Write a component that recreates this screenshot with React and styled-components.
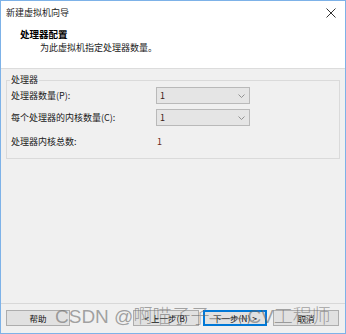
import React from "react"
import styled, { createGlobalStyle } from "styled-components"

const GlobalStyle = createGlobalStyle`
  html, body {
    margin: 0;
    padding: 0;
    background: #ffffff;
  }
  * {
    box-sizing: border-box;
  }
`

const rows = [
  { label: "处理器数量(P):", value: "1", select: true },
  { label: "每个处理器的内核数量(C):", value: "1", select: true },
  { label: "处理器内核总数:", value: "1", select: false },
]

const buttons = [
  { text: "帮助", primary: false, gapLeft: 0 },
  { text: "< 上一步(B)", primary: false, gapLeft: 63 },
  { text: "下一步(N) >", primary: true, gapLeft: 4 },
  { text: "取消", primary: false, gapLeft: 6 },
]

const App = () => {
  return (
    <>
      <GlobalStyle />
      <Window>
        <TitleBar>
          <TitleText>新建虚拟机向导</TitleText>
          <CloseButton>
            <svg width="10" height="10" viewBox="0 0 10 10">
              <path d="M0.5 0.5 L9.5 9.5 M9.5 0.5 L0.5 9.5" stroke="#333" strokeWidth="1" />
            </svg>
          </CloseButton>
        </TitleBar>
        <Header>
          <HeaderTitle>处理器配置</HeaderTitle>
          <HeaderSub>为此虚拟机指定处理器数量。</HeaderSub>
        </Header>
        <Body>
          <GroupBox>
            <Legend>处理器</Legend>
            <Rows>
              {rows.map((r) => (
                <Row key={r.label}>
                  <Label>{r.label}</Label>
                  {r.select ? (
                    <Select>
                      <span>{r.value}</span>
                      <svg width="7" height="4" viewBox="0 0 7 4">
                        <path d="M0.5 0.5 L3.5 3.5 L6.5 0.5" fill="none" stroke="#888" strokeWidth="0.9" />
                      </svg>
                    </Select>
                  ) : (
                    <Value>{r.value}</Value>
                  )}
                </Row>
              ))}
            </Rows>
          </GroupBox>
        </Body>
        <Footer>
          {buttons.map((b) => (
            <Button key={b.text} $primary={b.primary} $gap={b.gapLeft}>
              {b.text}
            </Button>
          ))}
          <Watermark>CSDN @啊喵子子——CV工程师</Watermark>
        </Footer>
      </Window>
    </>
  )
}

const Window = styled.div`
  position: relative;
  width: 346px;
  height: 334px;
  display: flex;
  flex-direction: column;
  border: 1px solid #7db2e8;
  background: #f0f0f0;
  font-family: "Noto Sans CJK SC", "Microsoft YaHei", sans-serif;
  font-size: 9px;
  color: #1a1a1a;
  overflow: hidden;
`

const TitleBar = styled.div`
  height: 22px;
  display: flex;
  align-items: center;
  justify-content: space-between;
  padding: 1px 8px 0 5px;
  background: #ffffff;
`

const TitleText = styled.span`
  font-size: 9px;
  line-height: 12px;
  color: #222;
`

const CloseButton = styled.span`
  display: flex;
  align-items: center;
  margin-right: 1px;
`

const Header = styled.div`
  height: 46px;
  background: #ffffff;
  border-bottom: 1px solid #dcdcdc;
  padding: 5px 0 0 19px;
  display: flex;
  flex-direction: column;
`

const HeaderTitle = styled.div`
  font-weight: 700;
  font-size: 9.5px;
  line-height: 12px;
  color: #000;
`

const HeaderSub = styled.div`
  font-size: 9px;
  line-height: 12px;
  margin-top: 2px;
  padding-left: 20px;
  color: #222;
`

const Body = styled.div`
  flex: 1;
  padding: 5px 5px 0 5px;
`

const GroupBox = styled.fieldset`
  margin: 0;
  padding: 1px 4px 8px 4px;
  border: 1px solid #dadada;
  border-radius: 0;
  min-width: 0;
`

const Legend = styled.legend`
  padding: 0 1px;
  margin-left: -1px;
  font-size: 9px;
  line-height: 12px;
  color: #222;
`

const Rows = styled.div`
  display: flex;
  flex-direction: column;
  gap: 5px;
`

const Row = styled.div`
  display: grid;
  grid-template-columns: 145px 94px;
  align-items: center;
  height: 17px;
  &:last-child {
    margin-top: 2px;
  }
`

const Label = styled.span`
  font-size: 9px;
  line-height: 12px;
  color: #1a1a1a;
`

const Select = styled.div`
  height: 17px;
  display: flex;
  align-items: center;
  justify-content: space-between;
  padding: 0 4px 0 3px;
  background: #e5e5e5;
  border: 1px solid #b9b9b9;
  font-size: 9px;
  line-height: 12px;
  color: #3a2015;
`

const Value = styled.span`
  font-size: 9px;
  line-height: 12px;
  color: #6a2a20;
  padding-left: 1px;
`

const Footer = styled.div`
  position: relative;
  height: 29px;
  border-top: 1px solid #d8d8d8;
  display: flex;
  align-items: flex-start;
  padding: 6px 0 0 5px;
  margin-bottom: 1px;
`

const Button = styled.div`
  width: ${(p) => (p.$primary ? 64 : p.$gap === 0 ? 64 : 66)}px;
  height: 16px;
  margin-left: ${(p) => p.$gap}px;
  display: flex;
  align-items: center;
  justify-content: center;
  background: #e1e1e1;
  border: 1px solid ${(p) => (p.$primary ? "#0078d7" : "#adadad")};
  box-shadow: ${(p) => (p.$primary ? "inset 0 0 0 1px #0078d7" : "none")};
  font-size: 8.5px;
  line-height: 11px;
  color: #111;
`

const Watermark = styled.div`
  position: absolute;
  left: 54px;
  top: 2px;
  font-family: "Liberation Sans", "Noto Sans CJK SC", sans-serif;
  font-size: 19px;
  line-height: 22px;
  font-weight: 300;
  color: rgba(100, 100, 100, 0.58);
  white-space: nowrap;
  pointer-events: none;
`

export default App
